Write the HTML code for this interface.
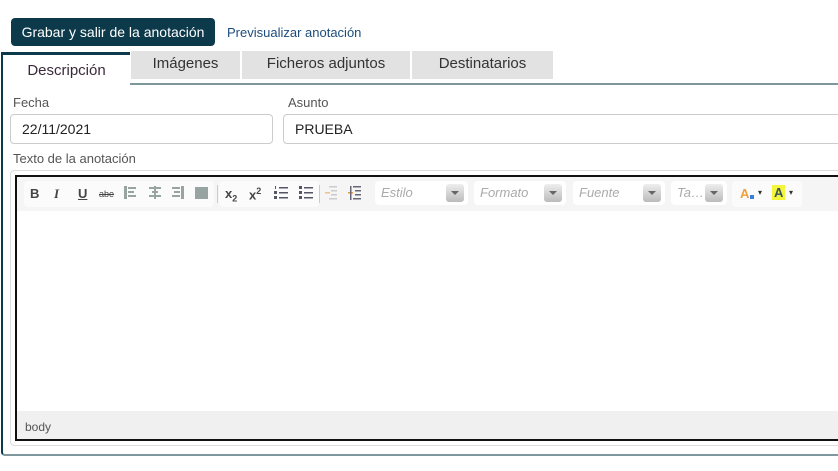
<!DOCTYPE html>
<html><head><meta charset="utf-8"><style>
*{box-sizing:border-box;margin:0;padding:0}
body{width:838px;height:471px;background:#fff;font-family:"Liberation Sans",sans-serif;position:relative;overflow:hidden;color:#333}
.a{position:absolute}
.btn{left:11px;top:18px;width:204px;height:28px;background:#0d3a4b;border-radius:4px;color:#fff;font-size:14px;line-height:28px;text-align:center}
.lnk{left:227px;top:25px;font-size:13px;color:#1d4c7c}
.tab{top:51px;height:28px;background:#e2e2e2;font-size:15px;color:#333;text-align:center;line-height:26px}
.tline{left:130px;top:83px;width:708px;height:2px;background:#7e979c}
.act{left:1px;top:52px;width:129px;height:34px;background:#fff;border-top:3px solid #0d3a4b;border-left:2px solid #0d3a4b;font-size:15px;color:#3a2a3a;text-align:center;line-height:32px}
.panel{left:1px;top:84px;width:850px;height:372px;border-left:2px solid #0d3a4b;border-bottom:2px solid #7e979c;border-bottom-left-radius:4px}
.lbl{font-size:13px;color:#555}
.inp{height:30px;border:1px solid #ccc;border-radius:4px;font-size:14px;color:#222;padding-left:11px;line-height:28px}
.wrap{left:10px;top:170px;width:840px;height:276px;border:1px solid #ddd;border-radius:4px}
.ed{left:15px;top:175px;width:835px;height:266px;border:2px solid #111;border-right:none;background:#fff}
.tb{left:17px;top:177px;width:830px;height:34px;background:#f5f5f5}
.ft{left:17px;top:411px;width:830px;height:28px;background:#f0f0f0;font-size:12px;color:#555;padding:9px 0 0 8px}
.g{top:181px;height:26px;background:#fbfbfb;border-radius:4px}
.ic{position:absolute;top:186px;font-size:13px;font-weight:bold;color:#444}
.cmb{top:181px;height:24px;background:#fff;border-radius:4px;font-size:13px;font-style:italic;color:#aaa;padding:4px 0 0 6px}
.dd{position:absolute;right:4px;top:3px;width:18px;height:18px;background:linear-gradient(#eee,#bbb);border-radius:3px}
.dd:after{content:"";position:absolute;left:5px;top:7px;border:4px solid transparent;border-top:4px solid #666}
</style></head><body>
<div class="a btn">Grabar y salir de la anotación</div>
<div class="a lnk">Previsualizar anotación</div>
<div class="a tab" style="left:131px;width:109px">Imágenes</div>
<div class="a tab" style="left:242px;width:168px">Ficheros adjuntos</div>
<div class="a tab" style="left:412px;width:141px">Destinatarios</div>
<div class="a tline"></div>
<div class="a panel"></div>
<div class="a act">Descripción</div>
<div class="a lbl" style="left:13px;top:95px">Fecha</div>
<div class="a lbl" style="left:288px;top:95px">Asunto</div>
<div class="a inp" style="left:10px;top:114px;width:263px">22/11/2021</div>
<div class="a inp" style="left:283px;top:114px;width:570px">PRUEBA</div>
<div class="a lbl" style="left:13px;top:151px">Texto de la anotación</div>
<div class="a wrap"></div>
<div class="a ed"></div>
<div class="a tb"></div>
<div class="a g" style="left:24px;width:190px"></div>
<div class="a g" style="left:219px;width:100px"></div>
<div class="a g" style="left:732px;width:70px"></div>
<span class="ic" style="left:30px">B</span>
<span class="ic" style="left:54px;font-style:italic;font-family:'Liberation Serif',serif">I</span>
<span class="ic" style="left:78px;text-decoration:underline">U</span>
<span class="ic" style="left:99px;font-size:9px;top:189px;font-weight:normal;text-decoration:line-through">abe</span>
<svg class="a" style="left:124px;top:186px" width="90" height="14" fill="#98a4a2">
<rect x="0" y="0" width="3" height="13"/><rect x="4" y="1" width="8" height="2"/><rect x="4" y="5" width="6" height="2"/><rect x="4" y="9" width="8" height="2"/>
<rect x="25" y="1" width="12" height="2"/><rect x="28" y="5" width="6" height="2"/><rect x="25" y="9" width="12" height="2"/><rect x="30" y="0" width="2" height="13"/>
<rect x="48" y="1" width="8" height="2"/><rect x="50" y="5" width="6" height="2"/><rect x="48" y="9" width="8" height="2"/><rect x="57" y="0" width="3" height="13"/>
<rect x="71" y="1" width="13" height="12"/></svg>
<div class="a" style="left:217px;top:185px;width:1px;height:18px;background:#ccc"></div>
<span class="ic" style="left:225px">x<sub style="font-size:9px">2</sub></span>
<span class="ic" style="left:249px">x<sup style="font-size:9px">2</sup></span>
<svg class="a" style="left:274px;top:186px" width="45" height="14" fill="#556">
<rect x="5" y="1" width="9" height="1.5"/><rect x="5" y="6" width="9" height="1.5"/><rect x="5" y="11" width="9" height="1.5"/>
<rect x="1" y="0" width="1" height="3"/><rect x="0" y="5" width="3" height="3"/><rect x="0" y="10" width="3" height="3"/>
<rect x="25" y="0" width="3" height="3"/><rect x="25" y="5" width="3" height="3"/><rect x="25" y="10" width="3" height="3"/>
<rect x="30" y="1" width="9" height="1.5"/><rect x="30" y="6" width="9" height="1.5"/><rect x="30" y="11" width="9" height="1.5"/></svg>
<div class="a" style="left:319px;top:185px;width:1px;height:18px;background:#ccc"></div>
<svg class="a" style="left:325px;top:186px" width="40" height="14">
<g fill="#ccc"><rect x="4" y="0" width="8" height="1.5"/><rect x="6" y="4" width="6" height="1.5"/><rect x="6" y="8" width="6" height="1.5"/><rect x="4" y="12" width="8" height="1.5"/><rect x="0" y="6" width="5" height="1.5" fill="#f0c090"/></g>
<g fill="#667"><rect x="28" y="0" width="8" height="1.5"/><rect x="30" y="4" width="6" height="1.5"/><rect x="30" y="8" width="6" height="1.5"/><rect x="28" y="12" width="8" height="1.5"/><rect x="23" y="6" width="5" height="1.5" fill="#e89a3a"/><rect x="25" y="0" width="1.5" height="14"/></g></svg>
<div class="a cmb" style="left:375px;width:93px">Estilo<span class="dd"></span></div>
<div class="a cmb" style="left:474px;width:92px">Formato<span class="dd"></span></div>
<div class="a cmb" style="left:573px;width:92px">Fuente<span class="dd"></span></div>
<div class="a cmb" style="left:671px;width:56px">Ta…<span class="dd"></span></div>
<span class="ic" style="left:740px;color:#f0a040">A</span>
<span class="a" style="left:750px;top:195px;width:4px;height:4px;background:#3a7de0"></span>
<span class="a" style="left:758px;top:188px;font-size:8px;color:#333">▾</span>
<span class="ic" style="left:772px;background:#f5f53a;color:#3a5560;padding:0 2px;top:185px">A</span>
<span class="a" style="left:789px;top:188px;font-size:8px;color:#333">▾</span>
<div class="a ft">body</div>
</body></html>
